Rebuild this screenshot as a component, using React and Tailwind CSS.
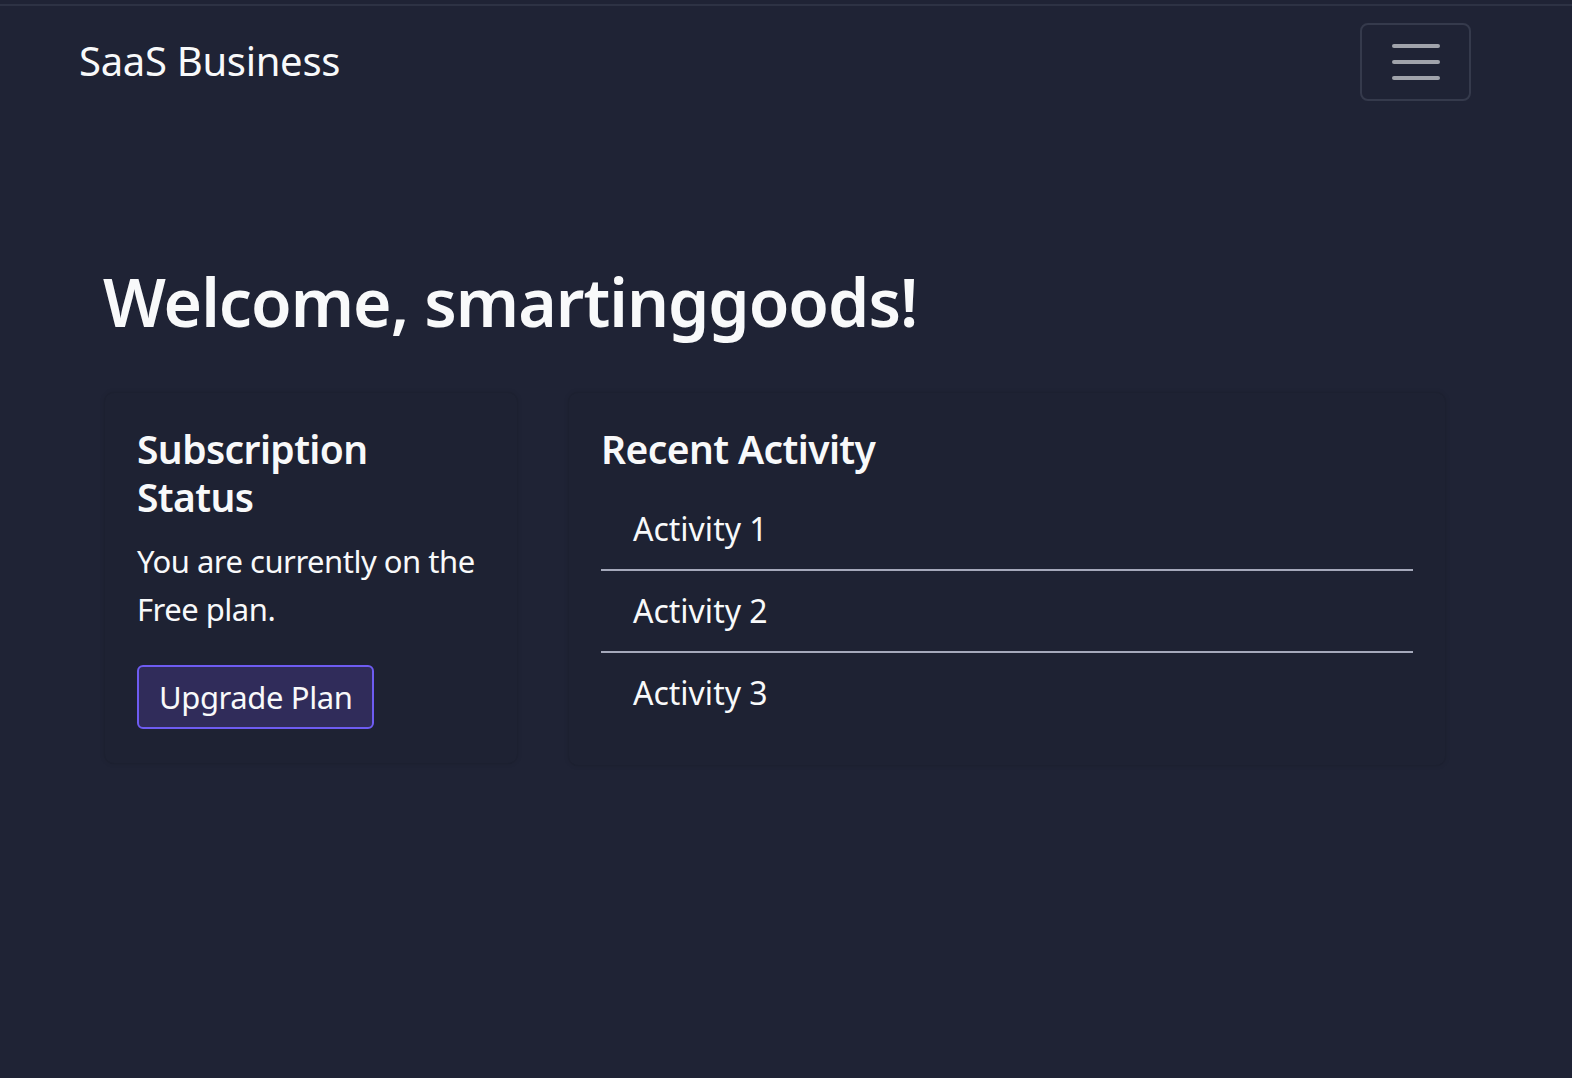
const activities = ["Activity 1", "Activity 2", "Activity 3"];

export default function App() {
  return (
    <div
      className="min-h-screen bg-[#1f2335] text-[#f8f9fa]"
      style={{ fontFamily: '"Noto Sans", "Open Sans", sans-serif' }}
    >
      <div className="pt-[4px]">
        <div className="h-[2px] bg-[#2d3244]" />
      </div>

      <nav className="pl-[79px] w-[1471px] flex items-center justify-between pt-[17px] pb-[20px]">
        <a href="#" className="text-[40px] leading-[60px] font-normal tracking-[-0.3px] text-[#f8f9fa] pt-[2px] pb-[4px]">
          SaaS Business
        </a>
        <button className="w-[111px] h-[78px] rounded-[8px] border-2 border-[#353a4c] flex flex-col items-center justify-center gap-[12px]">
          <span className="block w-[48px] h-[4px] rounded-full bg-[#a0a3ab]" />
          <span className="block w-[48px] h-[4px] rounded-full bg-[#a0a3ab]" />
          <span className="block w-[48px] h-[4px] rounded-full bg-[#a0a3ab]" />
        </button>
      </nav>

      <main className="pl-[79px] w-[1471px] pt-[140px]">
        <h1 className="pl-[24px] text-[66px] leading-[80px] font-semibold tracking-[-1px] mb-[51px]">
          Welcome, smartinggoods!
        </h1>

        <div className="flex items-start gap-[50px] pl-[25px]">
          <section className="w-[414px] rounded-[10px] border border-[#1c2030] bg-[#1e2233] shadow-[0_0_5px_rgba(0,0,0,0.1)] px-[32px] pt-[32px] pb-[34px]">
            <h2 className="text-[39px] leading-[48px] font-semibold tracking-[-0.6px] mb-[16px]">Subscription Status</h2>
            <p className="text-[31px] leading-[48px] tracking-[-0.5px] mb-[32px]">You are currently on the Free plan.</p>
            <button className="h-[64px] px-[20px] rounded-[6px] border-2 border-[#6e5cf2] bg-[#302c5a] text-[31px] leading-[48px] tracking-[-0.4px] text-[#f8f9fa]">
              Upgrade Plan
            </button>
          </section>

          <section className="w-[878px] rounded-[10px] border border-[#1c2030] bg-[#1e2233] shadow-[0_0_5px_rgba(0,0,0,0.1)] p-[32px]">
            <h2 className="text-[39px] leading-[48px] font-semibold tracking-[-0.6px] mb-[16px]">Recent Activity</h2>
            <ul>
              {activities.map((a, i) => (
                <li
                  key={a}
                  className={
                    i < activities.length - 1
                      ? "px-[32px] py-[16px] text-[32px] leading-[48px] border-b-2 border-[#a5a9bb]"
                      : "px-[32px] py-[16px] text-[32px] leading-[48px]"
                  }
                >
                  {a}
                </li>
              ))}
            </ul>
          </section>
        </div>
      </main>
    </div>
  );
}
